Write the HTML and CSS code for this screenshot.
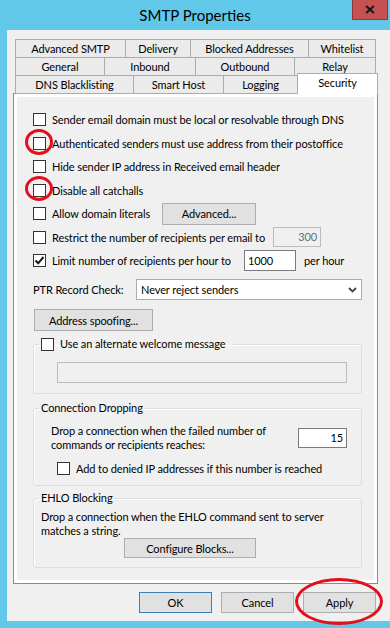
FILE: index.html
```html
<!DOCTYPE html>
<html>
<head>
  <title>SMTP Properties</title>
  <meta name="viewport" content="width=device-width, initial-scale=1.0">
  <link rel="stylesheet" href="styles.css">
</head>
<body>
  <div class="titlebar">
    <span class="title">SMTP Properties</span>
    <span class="close">
      <svg width="10" height="9" viewBox="0 0 10 9"><path d="M1.2 1 L8.8 8 M8.8 1 L1.2 8" stroke="#1a1a1a" stroke-width="2.2"/></svg>
    </span>
  </div>

  <div class="window">
    <div class="tabs">
      <div class="tabrow">
        <span class="tab t-adv">Advanced SMTP</span>
        <span class="tab t-del">Delivery</span>
        <span class="tab t-blk">Blocked Addresses</span>
        <span class="tab t-wht">Whitelist</span>
      </div>
      <div class="tabrow">
        <span class="tab t-gen">General</span>
        <span class="tab t-inb">Inbound</span>
        <span class="tab t-out">Outbound</span>
        <span class="tab t-rel">Relay</span>
      </div>
      <div class="tabrow front">
        <span class="tab t-dns">DNS Blacklisting</span>
        <span class="tab t-sma">Smart Host</span>
        <span class="tab t-log">Logging</span>
        <span class="tab sel t-sec">Security</span>
      </div>
    </div>

    <div class="panel">
      <div class="page">
        <div class="row"><span class="box"></span>Sender email domain must be local or resolvable through DNS</div>
        <div class="row"><span class="box"></span>Authenticated senders must use address from their postoffice</div>
        <div class="row"><span class="box"></span>Hide sender IP address in Received email header</div>
        <div class="row"><span class="box"></span>Disable all catchalls</div>
        <div class="row">
          <span class="box"></span><span class="lbl-literals">Allow domain literals</span>
          <button class="btn btn-adv">Advanced...</button>
        </div>
        <div class="row">
          <span class="box"></span><span class="lbl-restrict">Restrict the number of recipients per email to</span>
          <span class="field disabled f-300">300</span>
        </div>
        <div class="row">
          <span class="box"><svg width="11" height="11" viewBox="0 0 11 11"><path d="M1.5 5.5 L4.2 8.3 L9.5 2" fill="none" stroke="#1a1a1a" stroke-width="2"/></svg></span><span class="lbl-limit">Limit number of recipients per hour to</span>
          <span class="field f-1000">1000</span>
          <span class="per-hour">per hour</span>
        </div>

        <div class="ptr">
          <span class="lbl-ptr">PTR Record Check:</span>
          <div class="select">
            <span>Never reject senders</span>
            <svg width="9" height="6" viewBox="0 0 9 6"><path d="M1 1 L4.5 4.5 L8 1" fill="none" stroke="#444" stroke-width="1.8"/></svg>
          </div>
        </div>

        <button class="btn btn-spoof">Address spoofing...</button>

        <fieldset class="group g-welcome">
          <legend><span class="box"></span>Use an alternate welcome message</legend>
          <div class="group-body">
            <span class="field disabled f-welcome"></span>
          </div>
        </fieldset>

        <fieldset class="group g-drop">
          <legend>Connection Dropping</legend>
          <div class="group-body">
            <div class="drop-line">
              <span class="multi">Drop a connection when the failed number of<br>commands or recipients reaches:</span>
              <span class="field f-15">15</span>
            </div>
            <div class="row sub"><span class="box"></span>Add to denied IP addresses if this number is reached</div>
          </div>
        </fieldset>

        <fieldset class="group g-ehlo">
          <legend>EHLO Blocking</legend>
          <div class="group-body">
            <div class="multi">Drop a connection when the EHLO command sent to server<br>matches a string.</div>
            <button class="btn btn-blocks">Configure Blocks...</button>
          </div>
        </fieldset>
      </div>
    </div>

    <div class="actions">
      <button class="btn btn-foot default">OK</button>
      <button class="btn btn-foot">Cancel</button>
      <button class="btn btn-foot">Apply</button>
    </div>
  </div>

  <!-- red annotation marks -->
  <div class="mark m1"></div>
  <div class="mark m2"></div>
  <div class="mark m3"></div>
</body>
</html>
```

FILE: styles.css
```css
body {
  margin: 0;
  height: 628px;
  overflow: hidden;
  background: #62c8ea;
  font-family: "Segoe UI", Lato, "Noto Sans", sans-serif;
  font-size: 11px;
  letter-spacing: -0.1px;
  color: #000;
}

.titlebar {
  position: relative;
  height: 30px;
  line-height: 30px;
  text-align: center;
  font-size: 15px;
  letter-spacing: 0;
}

.close {
  position: absolute;
  top: 0;
  right: 2px;
  width: 36px;
  height: 20px;
  box-sizing: border-box;
  background: #c75050;
  border: 1px solid #8c3b3b;
  border-top: 0;
  display: flex;
  align-items: center;
  justify-content: center;
}

.window {
  margin-left: 7px;
  height: 591px;
  padding: 9px 0 0 6px;
  box-sizing: border-box;
  background: #f0f0f0;
}

/* tab strip */
.tabs {
  margin-left: 2px;
}
.tabrow {
  display: flex;
  height: 19px;
  margin-bottom: -1px;
}
.tabrow.front {
  position: relative;
  z-index: 1;
}
.tab {
  box-sizing: border-box;
  height: 19px;
  margin-left: -1px;
  border: 1px solid #acacac;
  background: #ebebeb;
  text-align: center;
  line-height: 17px;
  white-space: nowrap;
}
.tab:first-child { margin-left: 0; }
.tab.sel {
  height: 21px;
  margin-top: -2px;
  border-bottom: 0;
  background: #fff;
  line-height: 18px;
}
.t-adv { width: 111px; }
.t-del { width: 66px; }
.t-blk { width: 119px; }
.t-wht { width: 68px; }
.t-gen { width: 90px; }
.t-inb { width: 92px; }
.t-out { width: 100px; }
.t-rel { width: 82px; }
.t-dns { width: 119px; }
.t-sma { width: 91px; }
.t-log { width: 75px; }
.t-sec { width: 81px; }

.panel {
  width: 365px;
  height: 491px;
  box-sizing: border-box;
  border: 1px solid #898c95;
  background: #fff;
  padding: 3px;
}
.page {
  height: 100%;
  box-sizing: border-box;
  background: #f0f0f0;
  padding: 10.75px 0 0 16px;
}

.row {
  display: flex;
  align-items: center;
  height: 23.5px;
  white-space: nowrap;
}
.box {
  flex: none;
  width: 13px;
  height: 13px;
  box-sizing: border-box;
  border: 1px solid #333;
  background: #fff;
  margin-right: 6px;
  display: inline-flex;
  align-items: center;
  justify-content: center;
}

.lbl-literals { width: 110px; }
.lbl-restrict { width: 221px; }
.lbl-limit { width: 192px; }

.btn {
  font: inherit;
  letter-spacing: inherit;
  color: #000;
  background: #e1e1e1;
  border: 1px solid #adadad;
  padding: 0;
  box-sizing: border-box;
}
.btn-adv { width: 94px; height: 22px; }
.btn-spoof { width: 119px; height: 22px; margin: 9px 0 0 1px; display: block; }
.btn-blocks { width: 132px; height: 20px; margin-left: 83px; display: block; }

.field {
  box-sizing: border-box;
  height: 20px;
  border: 1px solid #7a7a7a;
  background: #fff;
  line-height: 18px;
  padding: 0 3px;
}
.field.disabled {
  border-color: #bcbcbc;
  background: #f0f0f0;
  color: #6d6d6d;
}
.f-300 { width: 48px; text-align: right; }
.f-1000 { width: 52px; height: 21px; line-height: 19px; }
.per-hour { margin-left: 8px; }
.f-15 { width: 49px; text-align: right; margin-left: auto; }
.f-welcome { display: block; width: 290px; height: 21px; }

.ptr {
  display: flex;
  align-items: center;
  height: 21px;
  margin-top: 7px;
}
.lbl-ptr { width: 103px; }
.select {
  width: 226px;
  height: 21px;
  box-sizing: border-box;
  border: 1px solid #acacac;
  background: #fff;
  display: flex;
  align-items: center;
  justify-content: space-between;
  padding: 0 4px 0 4px;
}

/* group boxes */
.group {
  width: 329px;
  box-sizing: border-box;
  margin: 0;
  padding: 0;
  border: 1px solid #d5dfe5;
  border-radius: 3px;
  box-shadow: inset 1px 1px 0 #fff;
}
.group legend {
  margin-left: 5px;
  padding: 0 2px;
  line-height: 16px;
  display: flex;
  align-items: center;
}
.g-welcome { margin-top: 5px; }
.g-welcome legend { padding-right: 8px; }
.g-welcome .group-body { padding: 10px 0 10px 23px; }

.g-drop { margin-top: 6px; }
.g-drop .group-body { padding: 8px 14px 9px 17px; }
.drop-line {
  display: flex;
  align-items: center;
}
.multi { line-height: 14px; }
.row.sub { height: 16px; margin: 8px 0 0 6px; }

.g-ehlo { margin-top: 4px; }
.g-ehlo .group-body { padding: 4px 0 9px 7px; }

.actions {
  display: flex;
  justify-content: flex-end;
  gap: 9px;
  width: 365px;
  box-sizing: border-box;
  padding-right: 2px;
  margin-top: 8px;
}
.btn-foot { width: 73px; height: 21px; }
.btn-foot.default { border-color: #3c7fb1; }

.mark {
  position: absolute;
  box-sizing: border-box;
  border: 3px solid #e3101c;
  border-radius: 50%;
}
.m1 { left: 25px; top: 129px; width: 28px; height: 26px; }
.m2 { left: 25px; top: 176px; width: 28px; height: 25px; }
.m3 { left: 295px; top: 578px; width: 88px; height: 47px; }
```
